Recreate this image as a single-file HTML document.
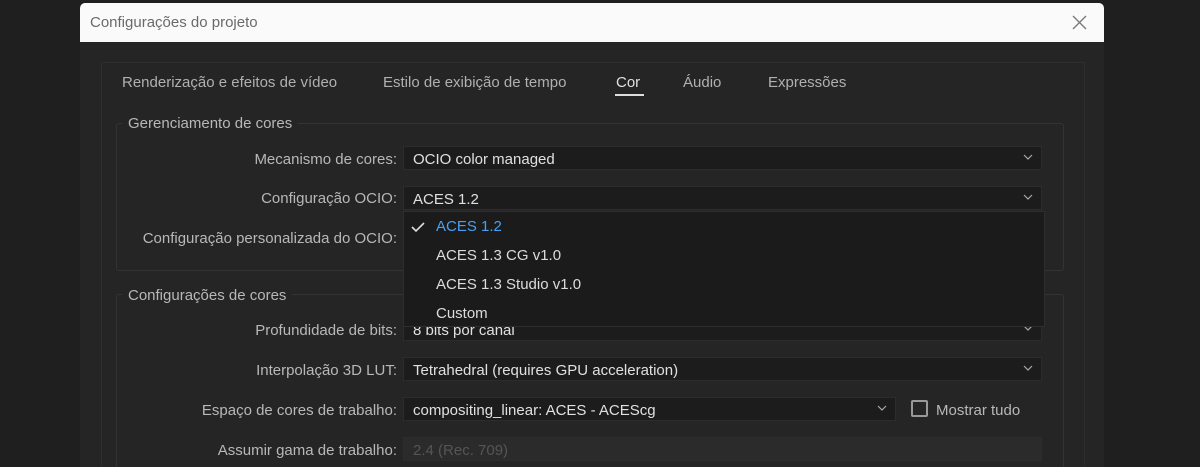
<!DOCTYPE html>
<html><head><style>
html,body{margin:0;width:1200px;height:467px;overflow:hidden}
body{background:#1f1f1f;font-family:"Liberation Sans",sans-serif;position:relative;color:#c8c8c8}
.a{position:absolute}
.dlg{left:80px;top:3px;width:1024px;height:464px;background:#252525;border-radius:5px 5px 0 0}
.title{left:80px;top:3px;width:1024px;height:39px;background:#fafafa;border-radius:5px 5px 0 0}
.t{font-size:15px;white-space:nowrap}
.lab{font-size:15px;color:#b8b8b8;text-align:right;width:280px;white-space:nowrap}
.f{background:#1c1c1c;border:1px solid #2c2c2c;height:24px;box-sizing:border-box;font-size:15px;color:#e0e0e0;padding:3px 9px;white-space:nowrap}
.chev{position:absolute;right:8px;top:5px;width:10px;height:10px}
.grp{border:1px solid #333;border-radius:3px}
</style></head><body>
<div class="a dlg"></div>
<div class="a title"></div>
<div class="a t" style="left:90px;top:14px;color:#6a6a6a">Configurações do projeto</div>
<svg class="a" style="left:1072px;top:15px" width="15" height="15"><path d="M1 1L14 14M14 1L1 14" stroke="#777" stroke-width="1.3"/></svg>
<div class="a" style="left:101px;top:62px;width:982px;height:410px;border:1px solid #2e2e2e"></div>
<div class="a t" style="left:122px;top:74px;color:#b0b0b0">Renderização e efeitos de vídeo</div>
<div class="a t" style="left:383px;top:74px;color:#b0b0b0">Estilo de exibição de tempo</div>
<div class="a t" style="left:616px;top:74px;color:#e0e0e0">Cor</div>
<div class="a" style="left:615px;top:94px;width:29px;height:2px;background:#ddd"></div>
<div class="a t" style="left:683px;top:74px;color:#b0b0b0">Áudio</div>
<div class="a t" style="left:768px;top:74px;color:#b0b0b0">Expressões</div>

<div class="a grp" style="left:116px;top:123px;width:946px;height:146px"></div>
<div class="a t" style="left:122px;top:115px;background:#252525;padding:0 6px;color:#b8b8b8">Gerenciamento de cores</div>
<div class="a grp" style="left:116px;top:294px;width:946px;height:190px"></div>
<div class="a t" style="left:122px;top:287px;background:#252525;padding:0 6px;color:#b8b8b8">Configurações de cores</div>

<div class="a lab" style="left:117px;top:151px">Mecanismo de cores:</div>
<div class="a f" style="left:403px;top:146px;width:639px;padding-top:4px">OCIO color managed<svg class="chev" viewBox="0 0 10 10"><path d="M1 3L5 7L9 3" fill="none" stroke="#aaa" stroke-width="1.2"/></svg></div>
<div class="a lab" style="left:117px;top:190px">Configuração OCIO:</div>
<div class="a f" style="left:403px;top:186px;width:639px;padding-top:4px">ACES 1.2<svg class="chev" viewBox="0 0 10 10"><path d="M1 3L5 7L9 3" fill="none" stroke="#aaa" stroke-width="1.2"/></svg></div>
<div class="a lab" style="left:117px;top:230px">Configuração personalizada do OCIO:</div>

<div class="a lab" style="left:117px;top:322px">Profundidade de bits:</div>
<div class="a f" style="left:403px;top:317px;width:639px;padding-top:4px">8 bits por canal<svg class="chev" viewBox="0 0 10 10"><path d="M1 3L5 7L9 3" fill="none" stroke="#aaa" stroke-width="1.2"/></svg></div>
<div class="a lab" style="left:117px;top:362px">Interpolação 3D LUT:</div>
<div class="a f" style="left:403px;top:357px;width:639px;padding-top:4px">Tetrahedral (requires GPU acceleration)<svg class="chev" viewBox="0 0 10 10"><path d="M1 3L5 7L9 3" fill="none" stroke="#aaa" stroke-width="1.2"/></svg></div>
<div class="a lab" style="left:117px;top:402px">Espaço de cores de trabalho:</div>
<div class="a f" style="left:403px;top:397px;width:493px;padding-top:4px">compositing_linear: ACES - ACEScg<svg class="chev" viewBox="0 0 10 10"><path d="M1 3L5 7L9 3" fill="none" stroke="#aaa" stroke-width="1.2"/></svg></div>
<div class="a" style="left:911px;top:400px;width:17px;height:17px;border:2px solid #999;box-sizing:border-box;border-radius:2px"></div>
<div class="a t" style="left:936px;top:402px;color:#b8b8b8">Mostrar tudo</div>
<div class="a lab" style="left:117px;top:442px">Assumir gama de trabalho:</div>
<div class="a f" style="left:403px;top:437px;width:639px;background:#2b2b2b;color:#555;padding-top:4px">2.4 (Rec. 709)</div>

<div class="a" style="left:403px;top:211px;width:642px;height:116px;background:#1b1b1b;border:1px solid #2e2e2e;box-sizing:border-box"></div>
<svg class="a" style="left:411px;top:221px" width="14" height="12"><path d="M1 6L5 10L13 2" fill="none" stroke="#ddd" stroke-width="1.6"/></svg>
<div class="a t" style="left:436px;top:218px;color:#4aa0f0">ACES 1.2</div>
<div class="a t" style="left:436px;top:247px;color:#dcdcdc">ACES 1.3 CG v1.0</div>
<div class="a t" style="left:436px;top:276px;color:#dcdcdc">ACES 1.3 Studio v1.0</div>
<div class="a t" style="left:436px;top:305px;color:#dcdcdc">Custom</div>
</body></html>
